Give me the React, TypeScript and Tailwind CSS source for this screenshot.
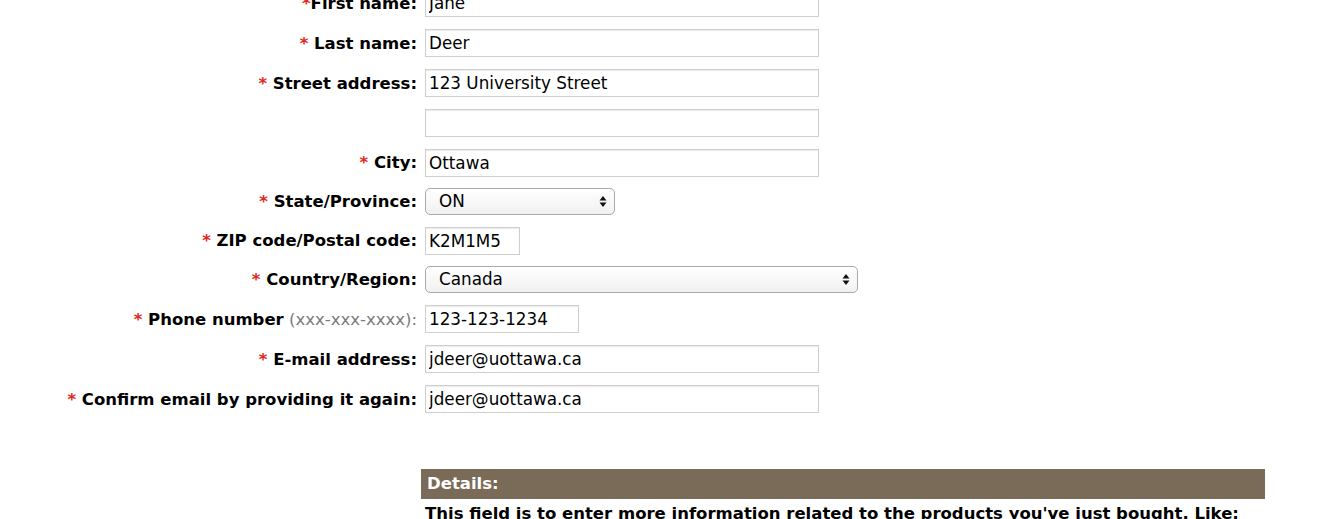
import React from 'react';

type Row = {
  label: string;
  hint?: string;
  required?: boolean;
  tight?: boolean;
  kind: 'text' | 'select';
  value: string;
  width: string;
  height: string;
};

const rows: Row[] = [
  { label: 'First name:', required: true, tight: true, kind: 'text', value: 'Jane', width: 'w-[394px]', height: 'h-10' },
  { label: 'Last name:', required: true, kind: 'text', value: 'Deer', width: 'w-[394px]', height: 'h-10' },
  { label: 'Street address:', required: true, kind: 'text', value: '123 University Street', width: 'w-[394px]', height: 'h-10' },
  { label: '', kind: 'text', value: '', width: 'w-[394px]', height: 'h-10' },
  { label: 'City:', required: true, kind: 'text', value: 'Ottawa', width: 'w-[394px]', height: 'h-[39px]' },
  { label: 'State/Province:', required: true, kind: 'select', value: 'ON', width: 'w-[190px]', height: 'h-[39px]' },
  { label: 'ZIP code/Postal code:', required: true, kind: 'text', value: 'K2M1M5', width: 'w-[95px]', height: 'h-[39px]' },
  { label: 'Country/Region:', required: true, kind: 'select', value: 'Canada', width: 'w-[433px]', height: 'h-[39px]' },
  { label: 'Phone number', hint: '(xxx-xxx-xxxx):', required: true, kind: 'text', value: '123-123-1234', width: 'w-[154px]', height: 'h-10' },
  { label: 'E-mail address:', required: true, kind: 'text', value: 'jdeer@uottawa.ca', width: 'w-[394px]', height: 'h-10' },
  { label: 'Confirm email by providing it again:', required: true, kind: 'text', value: 'jdeer@uottawa.ca', width: 'w-[394px]', height: 'h-10' },
];

const SelectArrows = () => (
  <svg width="8" height="13" viewBox="0 0 8 13" className="shrink-0">
    <path d="M4 1 L7.5 5.5 L0.5 5.5 Z" fill="#111" />
    <path d="M4 12 L7.5 7.5 L0.5 7.5 Z" fill="#111" />
  </svg>
);

const Field: React.FC<{ row: Row }> = ({ row }) => {
  if (row.kind === 'select') {
    return (
      <div
        className={`${row.width} h-[27px] flex items-center justify-between pl-[13px] pr-[7px] rounded-[5px] border border-[#a9a9a9] bg-gradient-to-b from-white to-[#f1f1f1] text-[16.8px] text-black`}
      >
        <span>{row.value}</span>
        <SelectArrows />
      </div>
    );
  }
  return (
    <input
      type="text"
      readOnly
      value={row.value}
      className={`${row.width} h-[28px] border border-[#cfcfcf] shadow-[inset_0_1px_1px_rgba(0,0,0,0.08)] bg-white px-[3px] text-[16.8px] text-black outline-none`}
    />
  );
};

export default function App() {
  return (
    <div className="bg-white min-h-screen overflow-hidden text-black" style={{ fontFamily: '"DejaVu Sans", Verdana, sans-serif' }}>
      <div className="-mt-[17px]">
        {rows.map((row, i) => (
          <div key={i} className={`grid grid-cols-[417px_auto] gap-x-2 items-center ${row.height}`}>
            <div className="text-right text-[16.5px] font-bold whitespace-nowrap pt-[2px]">
              {row.required && (
                <span className="text-[#e3261c]">{row.tight ? '*' : '* '}</span>
              )}
              {row.label}
              {row.hint && <span className="font-normal text-[#7a7a7a]"> {row.hint}</span>}
            </div>
            <div className="flex items-center">
              <Field row={row} />
            </div>
          </div>
        ))}
      </div>

      <div className="ml-[421px] mt-[50px] w-[844px]">
        <div className="h-[30px] bg-[#7a6b58] flex items-center pl-[6px] text-white font-bold text-[16.5px]">
          Details:
        </div>
        <p className="pl-[4px] pt-[3px] font-bold text-[16.5px] leading-[24px] whitespace-nowrap">
          This field is to enter more information related to the products you've just bought. Like:
        </p>
      </div>
    </div>
  );
}
